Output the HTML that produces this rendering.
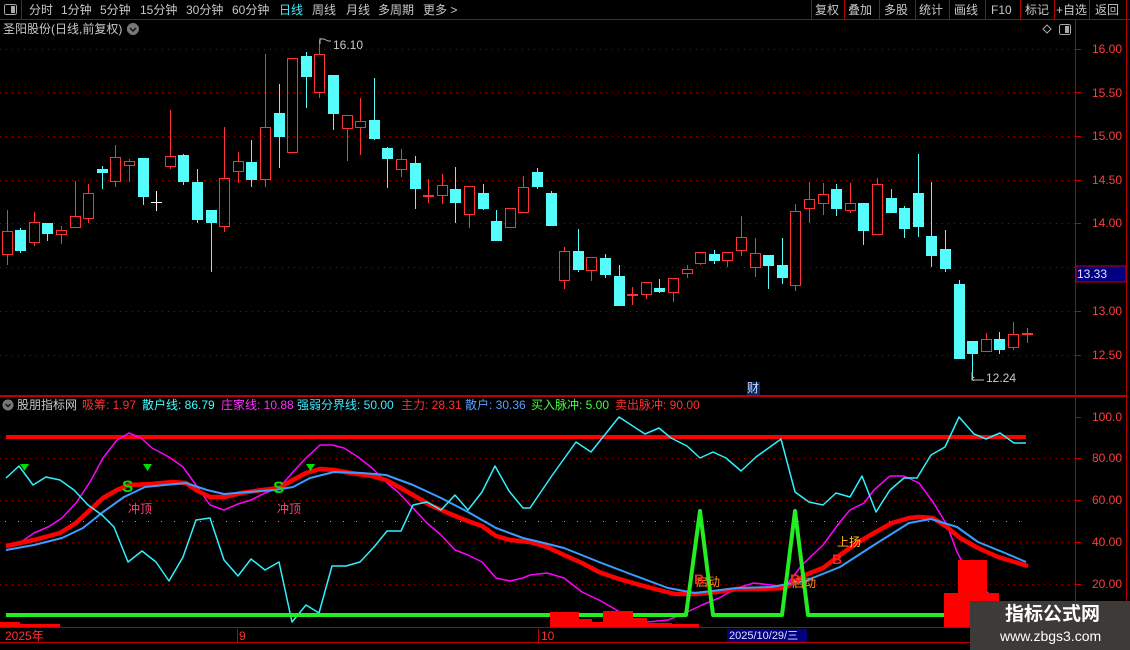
<!DOCTYPE html>
<html><head><meta charset="utf-8"><style>
*{margin:0;padding:0}
body{width:1130px;height:650px;background:#000;overflow:hidden;position:relative;font-family:"Liberation Sans","Noto Sans CJK SC",sans-serif;}
.t{position:absolute;white-space:nowrap;font-size:12px;line-height:14px;}
svg{position:absolute;left:0;top:0}
</style></head><body>
<svg width="1130" height="650" viewBox="0 0 1130 650" shape-rendering="crispEdges">
<line x1="0" y1="19.5" x2="1130" y2="19.5" stroke="#b00000"/>
<line x1="21.5" y1="0" x2="21.5" y2="19" stroke="#b00000"/>
<g stroke="#b00000">
<line x1="811.5" y1="0" x2="811.5" y2="19"/><line x1="844.5" y1="0" x2="844.5" y2="19"/><line x1="879.5" y1="0" x2="879.5" y2="19"/><line x1="915.5" y1="0" x2="915.5" y2="19"/><line x1="949.5" y1="0" x2="949.5" y2="19"/><line x1="985.5" y1="0" x2="985.5" y2="19"/><line x1="1020.5" y1="0" x2="1020.5" y2="19"/><line x1="1054.5" y1="0" x2="1054.5" y2="19"/><line x1="1089.5" y1="0" x2="1089.5" y2="19"/><line x1="1126.5" y1="0" x2="1126.5" y2="650"/>
<line x1="1075.5" y1="20" x2="1075.5" y2="628"/>
</g>
<line x1="0" y1="396" x2="1127" y2="396" stroke="#c00000" stroke-width="2"/>
<line x1="0" y1="627.5" x2="1127" y2="627.5" stroke="#c00000"/>
<line x1="0" y1="642.5" x2="1127" y2="642.5" stroke="#c00000"/>
<rect x="4.5" y="4.5" width="12" height="10" rx="2" fill="none" stroke="#aaa"/>
<rect x="11" y="6" width="4" height="7" fill="#aaa"/>
<circle cx="133" cy="29" r="6" fill="#777"/>
<path d="M130 28 L133 31 L136 28" stroke="#111" stroke-width="1.5" fill="none" shape-rendering="auto"/>
<path d="M1047 25 L1051 29 L1047 33 L1043 29 Z" fill="none" stroke="#aaa" shape-rendering="auto"/>
<rect x="1059.5" y="24.5" width="11" height="10" rx="2" fill="none" stroke="#aaa"/>
<rect x="1065" y="26" width="4" height="7" fill="#aaa"/>
<circle cx="8" cy="405" r="5.5" fill="#777"/>
<path d="M5.5 404 L8 406.5 L10.5 404" stroke="#111" stroke-width="1.5" fill="none" shape-rendering="auto"/>

<g stroke="#a00000" stroke-dasharray="1,5">
<line x1="0" y1="49.5" x2="1075" y2="49.5"/><line x1="0" y1="92.5" x2="1075" y2="92.5"/><line x1="0" y1="136.5" x2="1075" y2="136.5"/><line x1="0" y1="180.5" x2="1075" y2="180.5"/><line x1="0" y1="223.5" x2="1075" y2="223.5"/><line x1="0" y1="267.5" x2="1075" y2="267.5"/><line x1="0" y1="311.5" x2="1075" y2="311.5"/><line x1="0" y1="355.5" x2="1075" y2="355.5"/>
<line x1="0" y1="458.5" x2="1075" y2="458.5"/><line x1="0" y1="500.5" x2="1075" y2="500.5"/><line x1="0" y1="542.5" x2="1075" y2="542.5"/><line x1="0" y1="584.5" x2="1075" y2="584.5"/>
</g>
<line x1="5" y1="521.5" x2="1030" y2="521.5" stroke="#30d0e0" stroke-dasharray="1,12"/>
<g stroke="#c00000">
<line x1="1076" y1="49.5" x2="1081" y2="49.5"/><line x1="1076" y1="92.5" x2="1081" y2="92.5"/><line x1="1076" y1="136.5" x2="1081" y2="136.5"/><line x1="1076" y1="180.5" x2="1081" y2="180.5"/><line x1="1076" y1="223.5" x2="1081" y2="223.5"/><line x1="1076" y1="311.5" x2="1081" y2="311.5"/><line x1="1076" y1="355.5" x2="1081" y2="355.5"/>
<line x1="1076" y1="417.5" x2="1081" y2="417.5"/><line x1="1076" y1="458.5" x2="1081" y2="458.5"/><line x1="1076" y1="500.5" x2="1081" y2="500.5"/><line x1="1076" y1="542.5" x2="1081" y2="542.5"/><line x1="1076" y1="584.5" x2="1081" y2="584.5"/>
</g>
<rect x="1076" y="266" width="50" height="16" fill="#000080" stroke="#c00000"/>

<g stroke="#54fcfc" fill="#54fcfc">
<path fill="none" d="M20.5 228V253M47.5 223V241M102.5 166V189M143.5 158V205M183.5 154V185M197.5 169V223M211.5 210V272M251.5 140V187M279.5 84V168M306.5 52V108M333.5 75V130M374.5 78V140M387.5 147V188M415.5 156V209M455.5 167V223M483.5 184V210M496.5 210V241M537.5 168V189M551.5 191V226M578.5 229V272M605.5 254V278M619.5 265V306M659.5 279V293M714.5 250V264M768.5 255V289M782.5 238V284M836.5 184V216M863.5 203V245M891.5 189V213M904.5 206V238M918.5 154V237M931.5 182V267M945.5 230V272M959.5 280V359M972.5 341V378M999.5 332V354"/>
<g stroke="none">
<rect x="15" y="230" width="11" height="21"/><rect x="42" y="223" width="11" height="11"/><rect x="97" y="169" width="11" height="4"/><rect x="138" y="158" width="11" height="39"/><rect x="178" y="155" width="11" height="27"/><rect x="192" y="182" width="11" height="38"/><rect x="206" y="210" width="11" height="13"/><rect x="246" y="162" width="11" height="18"/><rect x="274" y="113" width="11" height="24"/><rect x="301" y="56" width="11" height="21"/><rect x="328" y="75" width="11" height="39"/><rect x="369" y="120" width="11" height="19"/><rect x="382" y="148" width="11" height="11"/><rect x="410" y="163" width="11" height="26"/><rect x="450" y="189" width="11" height="14"/><rect x="478" y="193" width="11" height="16"/><rect x="491" y="221" width="11" height="20"/><rect x="532" y="172" width="11" height="15"/><rect x="546" y="193" width="11" height="33"/><rect x="573" y="251" width="11" height="19"/><rect x="600" y="258" width="11" height="17"/><rect x="614" y="276" width="11" height="30"/><rect x="654" y="288" width="11" height="4"/><rect x="709" y="254" width="11" height="7"/><rect x="763" y="255" width="11" height="11"/><rect x="777" y="265" width="11" height="13"/><rect x="831" y="189" width="11" height="20"/><rect x="858" y="203" width="11" height="28"/><rect x="886" y="198" width="11" height="15"/><rect x="899" y="208" width="11" height="21"/><rect x="913" y="193" width="11" height="34"/><rect x="926" y="236" width="11" height="20"/><rect x="940" y="249" width="11" height="20"/><rect x="954" y="284" width="11" height="75"/><rect x="967" y="341" width="11" height="13"/><rect x="994" y="339" width="11" height="11"/>
</g></g>
<g stroke="#ff3232" fill="none">
<path d="M7.5 210V231M7.5 255V265M34.5 212V222M34.5 243V246M61.5 226V230M61.5 234V244M75.5 181V216M88.5 184V193M88.5 219V223M115.5 145V157M115.5 182V187M129.5 159V161M129.5 165V182M170.5 110V156M170.5 166V169M224.5 127V178M224.5 227V232M238.5 152V161M238.5 171V183M265.5 54V127M265.5 180V187M319.5 40V54M319.5 92V98M347.5 128V161M360.5 98V121M360.5 127V155M401.5 149V159M401.5 169V177M442.5 174V185M442.5 195V204M469.5 214V228M523.5 176V187M564.5 247V251M564.5 280V289M591.5 270V281M646.5 294V299M673.5 292V302M687.5 265V269M687.5 273V278M700.5 263V265M727.5 260V267M741.5 216V237M741.5 250V256M755.5 238V253M755.5 267V277M795.5 204V211M795.5 285V291M809.5 182V199M809.5 208V223M823.5 183V194M823.5 203V215M850.5 183V203M850.5 210V213M877.5 178V184M986.5 333V339M1013.5 322V334M1013.5 347V350M428.5 179V203M632.5 287V305M1027.5 328V343"/>
<rect x="2.5" y="231.5" width="10" height="23"/><rect x="29.5" y="222.5" width="10" height="20"/><rect x="56.5" y="230.5" width="10" height="4"/><rect x="70.5" y="216.5" width="10" height="11"/><rect x="83.5" y="193.5" width="10" height="25"/><rect x="110.5" y="157.5" width="10" height="24"/><rect x="124.5" y="161.5" width="10" height="4"/><rect x="165.5" y="156.5" width="10" height="10"/><rect x="219.5" y="178.5" width="10" height="48"/><rect x="233.5" y="161.5" width="10" height="10"/><rect x="260.5" y="127.5" width="10" height="52"/><rect x="287.5" y="58.5" width="10" height="94"/><rect x="314.5" y="54.5" width="10" height="38"/><rect x="342.5" y="115.5" width="10" height="13"/><rect x="355.5" y="121.5" width="10" height="6"/><rect x="396.5" y="159.5" width="10" height="10"/><rect x="437.5" y="185.5" width="10" height="10"/><rect x="464.5" y="186.5" width="10" height="28"/><rect x="505.5" y="208.5" width="10" height="19"/><rect x="518.5" y="187.5" width="10" height="25"/><rect x="559.5" y="251.5" width="10" height="29"/><rect x="586.5" y="257.5" width="10" height="13"/><rect x="641.5" y="282.5" width="10" height="12"/><rect x="668.5" y="278.5" width="10" height="14"/><rect x="682.5" y="269.5" width="10" height="4"/><rect x="695.5" y="252.5" width="10" height="11"/><rect x="722.5" y="252.5" width="10" height="8"/><rect x="736.5" y="237.5" width="10" height="13"/><rect x="750.5" y="253.5" width="10" height="14"/><rect x="790.5" y="211.5" width="10" height="74"/><rect x="804.5" y="199.5" width="10" height="9"/><rect x="818.5" y="194.5" width="10" height="9"/><rect x="845.5" y="203.5" width="10" height="7"/><rect x="872.5" y="184.5" width="10" height="50"/><rect x="981.5" y="339.5" width="10" height="12"/><rect x="1008.5" y="334.5" width="10" height="13"/>
</g>
<g fill="#ff3232"><rect x="423" y="195" width="11" height="2"/><rect x="627" y="294" width="11" height="2"/><rect x="1022" y="333" width="11" height="2"/></g>
<g stroke="#fff"><line x1="156.5" y1="191" x2="156.5" y2="211"/><line x1="151" y1="202.5" x2="162" y2="202.5"/></g>
<path d="M320 38V44M320 39H324L328 41H331" stroke="#bbb" fill="none"/>
<path d="M972 372V380H984M974 377L972 379L974 381" stroke="#bbb" fill="none"/>
<rect x="747" y="382" width="13" height="13" fill="#0a2a60"/>

<g shape-rendering="auto" fill="none" stroke-linejoin="round">
<line x1="6" y1="437" x2="1026" y2="437" stroke="#ff0000" stroke-width="4"/>
<polyline stroke="#ff00ff" stroke-width="1.5" points="6,545 21,542 34,533 48,527 62,518 76,503 90,482 103,458 117,440 129,433 141,438 152,448 169,457 183,467 196,485 210,505 224,510 238,504 251,500 265,493 279,488 293,472 306,458 320,445 332,445 344,448 358,457 372,468 386,482 399,493 413,508 427,523 441,535 455,550 468,555 482,562 496,578 510,581 523,578 530,575 547,573 564,578 582,592 599,600 613,608 630,618 647,622 668,620 685,613 702,605 719,598 737,588 754,583 771,585 785,587 802,565 823,545 840,522 850,510 864,503 874,490 890,476 904,476 919,483 933,502 947,525 957,552 971,578 988,593 998,602"/>
<polyline stroke="#ff0000" stroke-width="4.5" points="6,546 34,540 60,533 76,523 90,510 103,498 117,490 129,485 152,484 172,482 186,483 196,490 210,497 224,497 241,493 262,490 279,488 293,480 306,473 320,469 334,470 351,473 372,476 386,480 399,487 413,495 430,505 448,513 465,520 482,526 496,536 510,540 530,542 547,547 564,555 582,563 599,572 616,578 633,583 651,588 675,594 695,594 716,592 737,589 757,589 785,588 805,575 823,568 840,555 857,543 874,533 892,523 909,518 919,517 933,518 947,527 960,538 978,548 998,557 1028,566"/>
<polyline stroke="#3c9cff" stroke-width="2" points="6,550 34,545 62,538 83,528 103,512 124,497 145,487 165,485 186,483 207,490 224,494 248,492 275,490 293,487 310,478 334,472 362,473 386,475 413,485 441,498 468,512 496,528 523,538 540,542 564,548 599,562 633,575 668,588 695,593 737,588 771,587 805,581 840,567 874,545 909,523 931,519 957,527 978,542 1005,553 1026,562"/>
<polyline stroke="#30f0ff" stroke-width="1.5" points="6,478 19,466 33,485 46,477 60,480 74,490 88,505 102,515 114,527 128,562 142,551 156,562 169,581 183,557 196,520 210,518 224,560 238,576 251,559 265,570 279,562 292,622 306,605 319,613 332,566 346,566 360,562 374,547 387,531 401,531 413,505 427,502 441,510 455,495 468,510 482,492 495,466 509,491 523,508 530,508 551,477 576,442 591,452 619,417 645,434 659,428 671,438 687,446 700,458 713,452 726,458 741,471 756,457 781,439 795,492 809,502 823,505 836,493 850,497 862,476 876,512 890,490 904,478 917,478 931,455 945,447 959,417 974,434 986,439 1000,433 1014,443 1026,443"/>
<polyline stroke="#22ee22" stroke-width="4" points="6,615 686,615 700,511 713,615 782,615 795,511 808,615 1026,615"/>
</g>
<g fill="#ff0000">
<rect x="0" y="622" width="20" height="5"/><rect x="20" y="624" width="40" height="3"/>
<rect x="550" y="612" width="29" height="15"/><rect x="579" y="619" width="13" height="8"/><rect x="592" y="622" width="11" height="5"/><rect x="603" y="611" width="30" height="16"/><rect x="633" y="618" width="14" height="9"/><rect x="647" y="623" width="25" height="4"/><rect x="672" y="624" width="27" height="3"/>
<rect x="944" y="593" width="14" height="34"/><rect x="958" y="560" width="29" height="67"/><rect x="987" y="593" width="12" height="34"/>
</g>
<g fill="#00e000" shape-rendering="auto"><path d="M20 464H29L24.5 471Z"/><path d="M143 464H152L147.5 471Z"/><path d="M306 464H315L310.5 471Z"/></g>
<g stroke="#c00000"><line x1="237.5" y1="629" x2="237.5" y2="642"/><line x1="538.5" y1="629" x2="538.5" y2="642"/></g>
<rect x="727" y="629" width="80" height="13" fill="#000080"/>
<rect x="970" y="601" width="160" height="49" fill="#3d3a38"/>
</svg>

<div class="t" style="left:29px;top:3px;color:#c8c8c8">分时</div>
<div class="t" style="left:61px;top:3px;color:#c8c8c8">1分钟</div>
<div class="t" style="left:100px;top:3px;color:#c8c8c8">5分钟</div>
<div class="t" style="left:140px;top:3px;color:#c8c8c8">15分钟</div>
<div class="t" style="left:186px;top:3px;color:#c8c8c8">30分钟</div>
<div class="t" style="left:232px;top:3px;color:#c8c8c8">60分钟</div>
<div class="t" style="left:279px;top:3px;color:#40f0ff">日线</div>
<div class="t" style="left:312px;top:3px;color:#c8c8c8">周线</div>
<div class="t" style="left:346px;top:3px;color:#c8c8c8">月线</div>
<div class="t" style="left:378px;top:3px;color:#c8c8c8">多周期</div>
<div class="t" style="left:423px;top:3px;color:#c8c8c8">更多 &gt;</div>
<div class="t" style="left:815px;top:3px;color:#c8c8c8">复权</div>
<div class="t" style="left:848px;top:3px;color:#c8c8c8">叠加</div>
<div class="t" style="left:884px;top:3px;color:#c8c8c8">多股</div>
<div class="t" style="left:919px;top:3px;color:#c8c8c8">统计</div>
<div class="t" style="left:954px;top:3px;color:#c8c8c8">画线</div>
<div class="t" style="left:991px;top:3px;color:#c8c8c8">F10</div>
<div class="t" style="left:1025px;top:3px;color:#c8c8c8">标记</div>
<div class="t" style="left:1056px;top:3px;color:#c8c8c8">+自选</div>
<div class="t" style="left:1095px;top:3px;color:#c8c8c8">返回</div>
<div class="t" style="left:3px;top:22px;color:#c8c8c8;font-size:12px">圣阳股份(日线,前复权)</div>

<div class="t" style="left:1092px;top:42px;color:#ff3c3c">16.00</div>
<div class="t" style="left:1092px;top:86px;color:#ff3c3c">15.50</div>
<div class="t" style="left:1092px;top:129px;color:#ff3c3c">15.00</div>
<div class="t" style="left:1092px;top:173px;color:#ff3c3c">14.50</div>
<div class="t" style="left:1092px;top:216px;color:#ff3c3c">14.00</div>
<div class="t" style="left:1077px;top:267px;color:#e0e0ff">13.33</div>
<div class="t" style="left:1092px;top:304px;color:#ff3c3c">13.00</div>
<div class="t" style="left:1092px;top:348px;color:#ff3c3c">12.50</div>
<div class="t" style="left:1092px;top:410px;color:#ff3c3c">100.0</div>
<div class="t" style="left:1092px;top:451px;color:#ff3c3c">80.00</div>
<div class="t" style="left:1092px;top:493px;color:#ff3c3c">60.00</div>
<div class="t" style="left:1092px;top:535px;color:#ff3c3c">40.00</div>
<div class="t" style="left:1092px;top:577px;color:#ff3c3c">20.00</div>
<div class="t" style="left:333px;top:38px;color:#c8c8c8">16.10</div>
<div class="t" style="left:986px;top:371px;color:#c8c8c8">12.24</div>
<div class="t" style="left:747px;top:381px;color:#c8d8ff">财</div>

<div class="t" style="left:17px;top:398px;color:#c8c8c8">股朋指标网</div>
<div class="t" style="left:82px;top:398px;color:#ff3030">吸筹: 1.97</div>
<div class="t" style="left:142px;top:398px;color:#40ffff">散户线: 86.79</div>
<div class="t" style="left:221px;top:398px;color:#ff30ff">庄家线: 10.88</div>
<div class="t" style="left:297px;top:398px;color:#40e8ff">强弱分界线: 50.00</div>
<div class="t" style="left:401px;top:398px;color:#ff3030">主力: 28.31</div>
<div class="t" style="left:465px;top:398px;color:#5aa0ff">散户: 30.36</div>
<div class="t" style="left:531px;top:398px;color:#40ff40">买入脉冲: 5.00</div>
<div class="t" style="left:615px;top:398px;color:#ff3030">卖出脉冲: 90.00</div>

<div class="t" style="left:122px;top:478px;color:#00e000;font-size:17px;line-height:18px;font-weight:bold">S</div>
<div class="t" style="left:273px;top:479px;color:#00e000;font-size:17px;line-height:18px;font-weight:bold">S</div>
<div class="t" style="left:128px;top:502px;color:#ff4080">冲顶</div>
<div class="t" style="left:277px;top:502px;color:#ff4080">冲顶</div>
<div class="t" style="left:696px;top:575px;color:#ff9020">启动</div>
<div class="t" style="left:694px;top:572px;color:#ff2020;font-size:14px;font-weight:bold">B</div>
<div class="t" style="left:792px;top:576px;color:#ff9020">启动</div>
<div class="t" style="left:790px;top:572px;color:#ff2020;font-size:14px;font-weight:bold">B</div>
<div class="t" style="left:837px;top:535px;color:#ffc020">上扬</div>
<div class="t" style="left:832px;top:552px;color:#ff2020;font-size:14px;font-weight:bold">B</div>

<div class="t" style="left:5px;top:629px;color:#ff3030">2025年</div>
<div class="t" style="left:239px;top:629px;color:#ff3030">9</div>
<div class="t" style="left:541px;top:629px;color:#ff3030">10</div>
<div class="t" style="left:729px;top:629px;color:#e0e0ff;font-size:11px">2025/10/29/三</div>

<div class="t" style="left:1005px;top:604px;color:#fff;font-size:19px;line-height:22px;font-weight:bold">指标公式网</div>
<div class="t" style="left:1000px;top:628px;color:#fff;font-size:14px;line-height:16px">www.zbgs3.com</div>
</body></html>
